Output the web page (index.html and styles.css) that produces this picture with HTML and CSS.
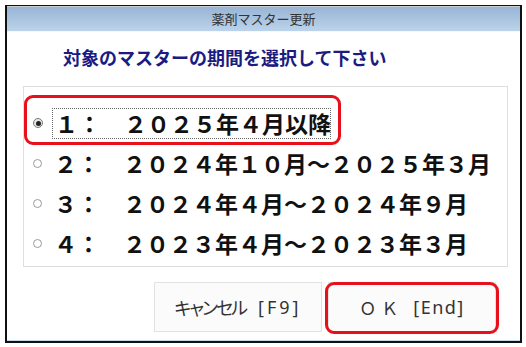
FILE: index.html
```html
<!DOCTYPE html>
<html lang="ja">
<head>
<meta charset="utf-8">
<title>薬剤マスター更新</title>
<link rel="stylesheet" href="styles.css">
</head>
<body>
<div class="window">
  <div class="titlebar">薬剤マスター更新</div>
  <div class="content">
    <h1 class="prompt">対象のマスターの期間を選択して下さい</h1>
    <div class="group">
      <div class="opt">
        <span class="radio on"></span>
        <span class="label focus">１：　２０２５年４月以降</span>
        <span class="mark mark-opt"></span>
      </div>
      <div class="opt">
        <span class="radio"></span>
        <span class="label">２：　２０２４年１０月～２０２５年３月</span>
      </div>
      <div class="opt">
        <span class="radio"></span>
        <span class="label">３：　２０２４年４月～２０２４年９月</span>
      </div>
      <div class="opt">
        <span class="radio"></span>
        <span class="label">４：　２０２３年４月～２０２３年３月</span>
      </div>
    </div>
    <div class="buttons">
      <button class="btn" type="button"><span class="kana">キャンセル</span><span class="key">[F9]</span></button>
      <div class="okwrap">
        <button class="btn" type="button"><span class="ok">ＯＫ</span><span class="key key-end">[End]</span></button>
        <span class="mark mark-ok"></span>
      </div>
    </div>
  </div>
</div>
</body>
</html>
```
FILE: styles.css
```css
html, body {
  margin: 0;
  padding: 0;
  background: #ffffff;
}

body {
  font-family: "Noto Sans CJK JP", "Noto Sans", sans-serif;
}

.window {
  box-sizing: border-box;
  margin: 5px 0 0 5px;
  width: 517px;
  height: 338px;
  border-style: solid;
  border-color: #111111;
  border-width: 1px 2px 2px 2px;
  box-shadow: inset 0 -1px 0 #c3d6ea;
  background: #ffffff;
  display: flex;
  flex-direction: column;
}

.titlebar {
  height: 24px;
  border-top: 1px solid #c9cdd2;
  border-bottom: 1px solid #f4f8fc;
  background: linear-gradient(#98b5d5, #bcd3ea);
  color: #333333;
  font-size: 13px;
  line-height: 24px;
  text-align: center;
}

.content {
  display: flex;
  flex-direction: column;
}

.prompt {
  margin: 13px 0 0 56px;
  font-size: 18px;
  line-height: 24px;
  font-weight: 700;
  color: #1b1b82;
}

.group {
  position: relative;
  margin: 17px 0 0 16px;
  width: 485px;
  box-sizing: border-box;
  border: 1px solid #dedede;
  padding: 16px 0 3px 0;
}

.opt {
  position: relative;
  display: flex;
  align-items: center;
  height: 40px;
  padding-left: 9px;
  gap: 9px;
}

.radio {
  box-sizing: border-box;
  width: 9px;
  height: 9px;
  border: 1px solid #9a9a9a;
  border-radius: 50%;
  background: #ffffff;
  flex: none;
  display: flex;
  align-items: center;
  justify-content: center;
}

.radio.on {
  width: 10px;
  height: 10px;
  border-color: #7a7a7a;
  background: #e6e6e6;
}

.radio.on::after {
  content: "";
  width: 5px;
  height: 5px;
  border-radius: 50%;
  background: #222222;
}

.label {
  font-size: 23px;
  line-height: 29px;
  font-weight: 700;
  color: #111111;
  padding: 1px 0 1px 3px;
  white-space: nowrap;
}

.label.focus {
  outline: 1px dotted #666666;
  outline-offset: -1px;
}

.mark {
  position: absolute;
  box-sizing: border-box;
  border: 3px solid #e8101a;
  border-radius: 9px;
  pointer-events: none;
}

.mark-opt {
  left: 0;
  top: -8px;
  width: 317px;
  height: 50px;
}

.buttons {
  display: flex;
  margin: 15px 0 0 147px;
  gap: 6px;
}

.btn {
  box-sizing: border-box;
  width: 168px;
  height: 50px;
  border: 1px solid #e2e2e2;
  background: #fbfbfb;
  color: #333333;
  font-family: "Noto Sans CJK JP", "Noto Sans", sans-serif;
  padding: 0;
  white-space: nowrap;
  display: flex;
  align-items: center;
  justify-content: center;
}

.kana {
  font-size: 18px;
  font-feature-settings: "palt";
  letter-spacing: -2px;
}

.key {
  font-family: "Noto Sans", sans-serif;
  font-size: 18px;
  letter-spacing: 3px;
  margin-left: 12px;
}

.ok {
  font-size: 17px;
  letter-spacing: 5px;
}

.key-end {
  letter-spacing: 1.5px;
  margin-left: 10px;
}

.okwrap {
  position: relative;
  display: flex;
}

.mark-ok {
  left: -3px;
  top: 0;
  width: 174px;
  height: 52px;
}
```
